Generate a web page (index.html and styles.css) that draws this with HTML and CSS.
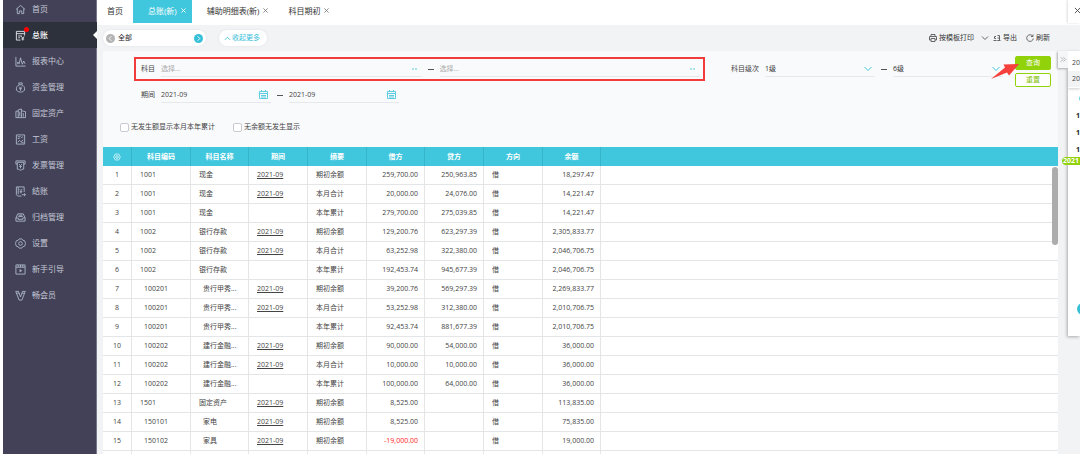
FILE: index.html
```html
<!DOCTYPE html>
<html lang="zh-CN">
<head>
<meta charset="utf-8">
<title>总账</title>
<link rel="stylesheet" href="styles.css">
</head>
<body>
<nav class="sidebar">
  <a class="nav-item" href="#"><svg class="nav-icon" viewBox="0 0 12 12"><path d="M1 6 6 1.5 11 6M2.5 5v5.5h2.2V7.6h2.6v2.9h2.2V5"/></svg>首页</a>
  <a class="nav-item active" href="#"><svg class="nav-icon" viewBox="0 0 12 12"><path d="M6 11H1.5V1.5h9V6M1.5 4h9M3.5 6.5h4M3.5 8.5h2M7 7l1.5 2L10 7M8.5 9v2.5M7 9.8h3"/></svg>总账<span class="dot"></span></a>
  <a class="nav-item" href="#"><svg class="nav-icon" viewBox="0 0 12 12"><path d="M1 1v10h10.5M3 9V6.500L4.500 8.500 6 2l2 7 1.500-3.500L11 8.500"/></svg>报表中心</a>
  <a class="nav-item" href="#"><svg class="nav-icon" viewBox="0 0 12 12"><path d="M4 1h4L7.3 3H4.7zM4.7 3C2.500 4 1.500 5.500 1.500 7.500S3 11 6 11s4.500-1.500 4.500-3.500S9.500 4 7.300 3M4.500 5 6 6.800 7.500 5M6 6.800V9.500M4.500 7.300h3"/></svg>资金管理</a>
  <a class="nav-item" href="#"><svg class="nav-icon" viewBox="0 0 12 12"><path d="M3.500 10.500V2L7 1v9.500M3.500 3.500H1v7h10.500V4L7 3M5.200 4v5M9 5.500v4"/></svg>固定资产</a>
  <a class="nav-item" href="#"><svg class="nav-icon" viewBox="0 0 12 12"><path d="M1.500 1h9v10h-9zM3 3h3M3 5h2M6.500 4.500 8 3l1 1M3 9l2-2 1.500 1.500L9 6.500M7 9.500h2.500"/></svg>工资</a>
  <a class="nav-item" href="#"><svg class="nav-icon" viewBox="0 0 12 12"><path d="M2.500 4.500H1V1h10v3.500H9.500M2.500 2.500h7V10H8L7 11H5l-1-1H2.500zM4.500 4.500 6 6l1.500-1.500M6 6v3M4.500 7h3"/></svg>发票管理</a>
  <a class="nav-item" href="#"><svg class="nav-icon" viewBox="0 0 12 12"><path d="M7 11H3L1.500 9.500V1H10v5.500M3.500 1v8M5 3.500l1.300 1.300L8 3.500M6.500 5v3M5 6.300h3M7.500 9.500h4M9.800 8l1.700 1.500L9.800 11"/></svg>结账</a>
  <a class="nav-item" href="#"><svg class="nav-icon" viewBox="0 0 12 12"><path d="M1 6.500 3 2h6l2 4.500V10H1zM1 6.500h2.500V8h5V6.500H11M4 3.500h4M3.500 5h5"/></svg>归档管理</a>
  <a class="nav-item" href="#"><svg class="nav-icon" viewBox="0 0 12 12"><path d="M4.500 1h3L8.500 2.500l2 .5 1 3-1 3-2 .5L7.500 11h-3l-1-1.500-2-.5-1-3 1-3 2-.5z"/><circle cx="6" cy="6" r="2"/></svg>设置</a>
  <a class="nav-item" href="#"><svg class="nav-icon" viewBox="0 0 12 12"><path d="M1 3.500V1h10v10H1V3.500h10M3.500 1v2.500M6 1v2.500M8.500 1v2.500"/><path class="solid" d="M5 5.500v3.500l3-1.700z"/></svg>新手引导</a>
  <a class="nav-item" href="#"><svg class="nav-icon" viewBox="0 0 12 12"><path d="M.8 1.500h3L6 7.500l2.200-6h3L7.500 11h-3zM2 3.500h2.300M7.700 3.500H10"/></svg>畅会员</a>
</nav>

<main class="main">
  <header class="tabs">
    <a class="tab" href="#">首页</a>
    <a class="tab current" href="#">总账(新)<svg class="close" viewBox="0 0 6 6"><path d="M.5 .5l5 5M5.500 .5l-5 5"/></svg></a>
    <a class="tab" href="#">辅助明细表(新)<svg class="close" viewBox="0 0 6 6"><path d="M.5 .5l5 5M5.500 .5l-5 5"/></svg></a>
    <a class="tab" href="#">科目期初<svg class="close" viewBox="0 0 6 6"><path d="M.5 .5l5 5M5.500 .5l-5 5"/></svg></a>
  </header>

  <div class="toolbar">
    <div class="pill scheme">
      <button class="round" type="button" aria-label="上一个"><svg viewBox="0 0 10 10"><path d="M6 2.500 3.500 5 6 7.500"/></svg></button>
      <span class="scheme-name">全部</span>
      <button class="round next" type="button" aria-label="下一个"><svg viewBox="0 0 10 10"><path d="M4 2.500 6.500 5 4 7.500"/></svg></button>
    </div>
    <button class="pill fold" type="button"><svg class="chevron" viewBox="0 0 8 8"><path d="M1 5.500 4 2.500l3 3"/></svg>收起更多</button>
    <div class="tools">
      <button class="tool" type="button"><svg viewBox="0 0 8 8"><path d="M2 2.500v-2h4v2M2 6H.5V2.500h7V6H6M2 4.500h4v3H2z"/></svg>按模板打印</button>
      <button class="tool more" type="button" aria-label="更多打印"><svg viewBox="0 0 8 8"><path d="M1 2.500l3 3 3-3"/></svg></button>
      <button class="tool" type="button"><svg viewBox="0 0 8 8"><path d="M3 2.500H1.500v2H3M.5 6.500h3M4.500 1.500h2v5h-2M4.500 4h2M7.500 6.500h-3"/></svg>导出</button>
      <button class="tool refresh" type="button"><svg viewBox="0 0 8 8"><path d="M6.800 2.300A3.300 3.300 0 1 0 7.300 4.500M7 .5v2H5"/></svg>刷新</button>
    </div>
  </div>

  <form class="filter">
    <div class="filter-row">
      <div class="subject">
        <label for="subject-from">科目</label>
        <span class="field grow"><input id="subject-from" type="text" placeholder="选择..."><svg class="dots" viewBox="0 0 8 4"><path d="M1 2h6"/></svg></span>
        <span class="dash"></span>
        <span class="field grow"><input type="text" placeholder="选择..." aria-label="科目至"><svg class="dots" viewBox="0 0 8 4"><path d="M1 2h6"/></svg></span>
      </div>
      <div class="level">
        <label for="level-from">科目级次</label>
        <span class="field grow"><select id="level-from"><option>1级</option></select><svg class="arrow" viewBox="0 0 8 8"><path d="M.5 2 4 5.500 7.500 2"/></svg></span>
        <span class="dash"></span>
        <span class="field grow"><select aria-label="级次至"><option>6级</option></select><svg class="arrow" viewBox="0 0 8 8"><path d="M.5 2 4 5.500 7.500 2"/></svg></span>
      </div>
      <div class="actions">
        <button class="btn query" type="button">查询</button>
        <button class="btn reset" type="reset">重置</button>
        <svg class="pointer" viewBox="0 0 28 17"><path d="M0 16 14 4.500 12.500 1.500 28 1 18 12.500l-2-3z"/></svg>
      </div>
    </div>
    <div class="filter-row period">
      <label for="period-from">期间</label>
      <span class="field"><input id="period-from" type="text" value="2021-09"><svg class="cal" viewBox="0 0 9 9"><path d="M.5 1.500h8v7h-8zM.5 3.500h8M2.500 0v2M6.500 0v2M2 5.500h5M2 7h5"/></svg></span>
      <span class="dash"></span>
      <span class="field"><input type="text" value="2021-09" aria-label="期间至"><svg class="cal" viewBox="0 0 9 9"><path d="M.5 1.500h8v7h-8zM.5 3.500h8M2.500 0v2M6.500 0v2M2 5.500h5M2 7h5"/></svg></span>
    </div>
    <div class="filter-row checks">
      <label><input type="checkbox">无发生额显示本月本年累计</label>
      <label><input type="checkbox">无余额无发生显示</label>
    </div>
  </form>

  <section class="grid">
    <table>
      <colgroup><col class="c-index"><col class="c-wide"><col class="c-data"><col class="c-wide"><col class="c-wide"><col class="c-data"><col class="c-wide"><col class="c-wide"><col class="c-data"><col></colgroup>
      <thead><tr><th><svg class="gear" viewBox="0 0 12 12"><path d="M3.500 1.500h5L11 6l-2.500 4.500h-5L1 6z"/><circle cx="6" cy="6" r="2"/></svg></th><th>科目编码</th><th>科目名称</th><th>期间</th><th>摘要</th><th>借方</th><th>贷方</th><th>方向</th><th>余额</th><th></th></tr></thead>
      <tbody>
        <tr><td>1</td><td>1001</td><td>现金</td><td><a href="#">2021-09</a></td><td>期初余额</td><td>259,700.00</td><td>250,963.85</td><td>借</td><td>18,297.47</td><td></td></tr>
        <tr><td>2</td><td>1001</td><td>现金</td><td><a href="#">2021-09</a></td><td>本月合计</td><td>20,000.00</td><td>24,076.00</td><td>借</td><td>14,221.47</td><td></td></tr>
        <tr><td>3</td><td>1001</td><td>现金</td><td></td><td>本年累计</td><td>279,700.00</td><td>275,039.85</td><td>借</td><td>14,221.47</td><td></td></tr>
        <tr><td>4</td><td>1002</td><td>银行存款</td><td><a href="#">2021-09</a></td><td>期初余额</td><td>129,200.76</td><td>623,297.39</td><td>借</td><td>2,305,833.77</td><td></td></tr>
        <tr><td>5</td><td>1002</td><td>银行存款</td><td><a href="#">2021-09</a></td><td>本月合计</td><td>63,252.98</td><td>322,380.00</td><td>借</td><td>2,046,706.75</td><td></td></tr>
        <tr><td>6</td><td>1002</td><td>银行存款</td><td></td><td>本年累计</td><td>192,453.74</td><td>945,677.39</td><td>借</td><td>2,046,706.75</td><td></td></tr>
        <tr class="child"><td>7</td><td>100201</td><td>贵行甲秀...</td><td><a href="#">2021-09</a></td><td>期初余额</td><td>39,200.76</td><td>569,297.39</td><td>借</td><td>2,269,833.77</td><td></td></tr>
        <tr class="child"><td>8</td><td>100201</td><td>贵行甲秀...</td><td><a href="#">2021-09</a></td><td>本月合计</td><td>53,252.98</td><td>312,380.00</td><td>借</td><td>2,010,706.75</td><td></td></tr>
        <tr class="child"><td>9</td><td>100201</td><td>贵行甲秀...</td><td></td><td>本年累计</td><td>92,453.74</td><td>881,677.39</td><td>借</td><td>2,010,706.75</td><td></td></tr>
        <tr class="child"><td>10</td><td>100202</td><td>建行金融...</td><td><a href="#">2021-09</a></td><td>期初余额</td><td>90,000.00</td><td>54,000.00</td><td>借</td><td>36,000.00</td><td></td></tr>
        <tr class="child"><td>11</td><td>100202</td><td>建行金融...</td><td><a href="#">2021-09</a></td><td>本月合计</td><td>10,000.00</td><td>10,000.00</td><td>借</td><td>36,000.00</td><td></td></tr>
        <tr class="child"><td>12</td><td>100202</td><td>建行金融...</td><td></td><td>本年累计</td><td>100,000.00</td><td>64,000.00</td><td>借</td><td>36,000.00</td><td></td></tr>
        <tr><td>13</td><td>1501</td><td>固定资产</td><td><a href="#">2021-09</a></td><td>期初余额</td><td>8,525.00</td><td></td><td>借</td><td>113,835.00</td><td></td></tr>
        <tr class="child"><td>14</td><td>150101</td><td>家电</td><td><a href="#">2021-09</a></td><td>期初余额</td><td>8,525.00</td><td></td><td>借</td><td>75,835.00</td><td></td></tr>
        <tr class="child"><td>15</td><td>150102</td><td>家具</td><td><a href="#">2021-09</a></td><td>期初余额</td><td class="negative">-19,000.00</td><td></td><td>借</td><td>19,000.00</td><td></td></tr>
        <tr><td></td><td></td><td></td><td></td><td></td><td></td><td></td><td></td><td></td><td></td></tr>
      </tbody>
    </table>
    <div class="scroll-thumb"></div>
  </section>
</main>

<button class="drawer-close" type="button" aria-label="关闭"><svg viewBox="0 0 8 8"><path d="M1 1l6 6M7 1 1 7"/></svg></button>
<aside class="drawer">
  <button class="drawer-toggle" type="button" aria-label="收起"><svg viewBox="0 0 8 8"><path d="M1 1.500 3.500 4 1 6.500M4 1.500 6.500 4 4 6.500"/></svg></button>
  <div class="drawer-view">
    <div class="drawer-head"><span>20</span><span>20</span></div>
    <div class="drawer-list"><i class="ring"></i><b>1</b><b>1</b><b>1</b></div>
    <i class="knob"></i>
  </div>
  <span class="year">2021</span>
</aside>
</body>
</html>
```

FILE: styles.css
```css
* { box-sizing: border-box; }

body {
  margin: 0;
  height: 100vh;
  display: flex;
  position: relative;
  overflow: hidden;
  padding-left: 3px;
  background: #fff;
  color: #444;
  font: 7px/10px "Open Sans", "Noto Sans CJK SC", sans-serif;
}

button, input, select { font: inherit; color: inherit; margin: 0; padding: 0; border: 0; background: none; }
a { color: inherit; text-decoration: none; }
svg { display: block; flex: none; fill: none; stroke: currentColor; }

/* Sidebar */
.sidebar {
  flex: none;
  width: 94px;
  background: #434157;
  border-right: 1px solid #77778a;
  color: #c3cad6;
  font-size: 8px;
}
.nav-item { position: relative; display: flex; align-items: center; gap: 6px; height: 26px; padding-left: 12px; margin-right: -1px; }
.nav-item:first-child { margin-top: -4px; }
.nav-icon { width: 11px; height: 11px; stroke-width: 1; color: #aab6c6; }
.nav-icon .solid { fill: currentColor; stroke: none; }
.nav-item.active { background: #2c313c; color: #fff; font-weight: 500; }
.nav-item.active .nav-icon { color: #e4e6ea; }
.nav-item.active::after {
  content: "";
  position: absolute;
  right: 0;
  border: 4px solid transparent;
  border-left-width: 0;
  border-right-color: #fff;
}
.dot { position: absolute; left: 21px; top: 5px; width: 5px; height: 5px; border-radius: 50%; background: #f00; }

/* Tabs */
.main { flex: 1; min-width: 0; display: flex; flex-direction: column; background: #f2f3f5; }
.tabs { display: flex; flex: none; height: 25px; background: #fff; font-size: 8px; }
.tab { display: flex; align-items: center; gap: 4px; height: 23px; padding: 0 10px 2px; color: #333; }
.tab.current { padding: 0 6px 2px 15px; margin-right: 5px; background: #41c7dd; color: #fff; }
.close { width: 5px; height: 5px; stroke-width: 1; color: #777; }
.current .close { color: #fff; }

/* Toolbar */
.toolbar { display: flex; flex: none; align-items: center; gap: 13px; height: 26px; padding: 0 30px 0 6px; }
.pill { display: flex; align-items: center; height: 16px; border-radius: 8px; background: #fff; box-shadow: 0 0 2px #d8dbe0; }
.scheme { width: 103px; padding: 0 3px; gap: 3px; }
.scheme-name { flex: 1; color: #222; }
.round { width: 9px; height: 9px; border-radius: 50%; background: #b4b4b4; color: #fff; }
.round.next { background: #35c0d8; }
.fold { width: 48px; padding-left: 5px; gap: 1px; color: #35c0d8; }
.chevron { width: 7px; height: 7px; }
.tools { display: flex; align-items: center; gap: 4px; margin-left: auto; }
.tools svg { width: 8px; height: 8px; stroke-width: 1; color: #666; }
.tool { display: flex; align-items: center; gap: 2px; color: #333; }
.tool.more { margin-left: 3px; }
.tool.refresh { margin-left: 5px; }

/* Filter */
.filter { flex: none; height: 96px; margin: 0 22px 0 6px; padding: 5px 7px 0 31px; background: #f9fafc; }
.filter-row { display: flex; align-items: center; gap: 6px; }
.subject {
  flex: 1;
  display: flex;
  align-items: center;
  gap: 6px;
  height: 24px;
  padding: 0 3px 0 5px;
  border: 2px solid #f23c3c;
  margin-bottom: 5px;
}
.level { display: flex; align-items: center; gap: 6px; width: 272px; height: 24px; margin: 0 6px 5px 20px; }
.field { display: flex; align-items: center; width: 110px; height: 16px; padding-right: 3px; border-bottom: 1px solid #e6e8ec; }
.field.grow { flex: 1; width: auto; min-width: 0; }
.field input { flex: 1; min-width: 0; width: 100%; height: 12px; outline: 0; }
.field input::placeholder { color: #aaa; opacity: 1; }
.field select { flex: 1; min-width: 0; height: 12px; appearance: none; outline: 0; color: #333; }
.subject label, .level label, .period label { flex: none; }
.dash { flex: none; width: 6px; height: 1px; background: #555; }
.dots { width: 8px; height: 4px; color: #5dcbe0; stroke-dasharray: 2 1; }
.arrow { width: 8px; height: 8px; color: #41c7dd; }
.cal { width: 9px; height: 9px; color: #5dcbe0; }
.actions { position: relative; display: flex; flex-direction: column; gap: 3px; width: 36px; }
.btn { height: 14px; border: 1px solid #92d20b; border-radius: 2px; line-height: 12px; }
.query { background: #92d20b; color: #fff; }
.reset { background: #fff; color: #82c000; }
.pointer { position: absolute; right: 32px; top: 7px; width: 28px; height: 17px; fill: #f5403c; stroke: none; }
.period { height: 16px; padding-left: 7px; }
.checks { gap: 18px; margin-top: 19px; margin-left: -14px; }
.checks label { display: flex; align-items: center; gap: 2px; }
.checks input { appearance: none; width: 9px; height: 9px; border: 1px solid #c8ccd2; border-radius: 2px; background: #fff; }

/* Ledger table */
.grid { position: relative; flex: 1; min-height: 0; margin: 0 22px 0 6px; overflow: hidden; background: #fff; }
table { width: 100%; table-layout: fixed; border-collapse: separate; border-spacing: 0; }
.c-index { width: 29px; }
.c-wide { width: 59px; }
.c-data { width: 58px; }
th { height: 19px; padding: 0; border-right: 1px solid #35b5ca; background: #41c7dd; color: #fff; font-weight: 700; }
.gear { width: 8px; height: 8px; margin: 0 auto; }
td { height: 19px; padding: 0 6px 0 8px; border-right: 1px solid #e4e5e7; border-bottom: 1px solid #e4e5e7; white-space: nowrap; }
th:last-child, td:last-child { border-right: 0; }
td:first-child { padding: 0; text-align: center; }
td:nth-child(6), td:nth-child(7), td:nth-child(9) { text-align: right; }
td a { text-decoration: underline; }
.child td:nth-child(2), .child td:nth-child(3) { padding-left: 12px; }
.negative { color: #f22; }
.scroll-thumb { position: absolute; right: 0; top: 20px; width: 6px; height: 78px; border-radius: 3px; background: #acacac; }

/* Drawer floating over the right edge */
.drawer-close { position: absolute; right: 0; top: 0; width: 12px; height: 23px; padding-left: 6px; overflow: hidden; background: #fff; box-shadow: -1px 0 2px #ddd; }
.drawer-close svg { width: 7px; height: 7px; margin-top: -2px; }
.drawer { position: absolute; right: 0; top: 51px; width: 12px; height: 285px; background: #fff; box-shadow: -1px 1px 3px #aaa; }
.drawer-toggle { position: absolute; right: 12px; top: 0; width: 10px; height: 17px; padding-left: 2px; background: #f5f6f7; color: #aaa; box-shadow: -1px 1px 2px #aaa; }
.drawer-toggle svg { width: 7px; height: 7px; }
.drawer-view { position: relative; height: 100%; overflow: hidden; background: #fff; }
.drawer-head { display: flex; flex-direction: column; height: 37px; padding-top: 4px; box-shadow: 0 1px 3px #ccc; }
.drawer-head span { height: 16px; padding-left: 4px; line-height: 16px; }
.drawer-head span + span { background: #f2f3f5; }
.drawer-list { display: flex; flex-direction: column; padding: 7px 0 0 8px; color: #222; }
.drawer-list b { height: 17px; line-height: 17px; }
.ring { width: 7px; height: 7px; margin: 0 0 5px 3px; border: 1px solid #41c7dd; border-radius: 50%; }
.knob { position: absolute; left: 9px; top: 252px; width: 12px; height: 12px; border-radius: 50%; background: #35c0d8; }
.year { position: absolute; right: 0; top: 106px; width: 18px; height: 8px; padding-left: 1px; border-radius: 4px 0 0 4px; background: #92d20b; color: #fff; font-weight: 700; line-height: 8px; }
```
